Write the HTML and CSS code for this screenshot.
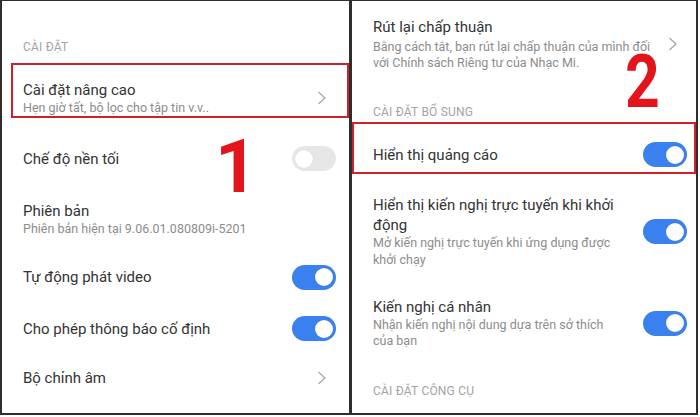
FILE: index.html
```html
<!DOCTYPE html>
<html lang="vi">
<head>
<meta charset="utf-8">
<title>Cài đặt</title>
<link rel="stylesheet" href="styles.css">
</head>
<body>
<div class="screen">
  <section class="panel panel-left">
    <div class="section-head head-top">CÀI ĐẶT</div>

    <div class="row row-box row-box-left">
      <div class="text">
        <div class="title">Cài đặt nâng cao</div>
        <div class="sub">Hẹn giờ tất, bộ lọc cho tập tin v.v..</div>
      </div>
      <span class="chev"><svg width="10" height="14" viewBox="0 0 10 14"><path d="M2 1.5 L8 7 L2 12.5" fill="none" stroke="#a8a8a8" stroke-width="1.4" stroke-linecap="round" stroke-linejoin="round"/></svg></span>
    </div>

    <div class="row row-dark">
      <div class="text"><div class="title">Chế độ nền tối</div></div>
      <span class="toggle"><span class="knob"></span></span>
    </div>

    <div class="row row-version">
      <div class="text">
        <div class="title">Phiên bản</div>
        <div class="sub">Phiên bản hiện tại 9.06.01.080809i-5201</div>
      </div>
    </div>

    <div class="row row-autoplay">
      <div class="text"><div class="title">Tự động phát video</div></div>
      <span class="toggle on"><span class="knob"></span></span>
    </div>

    <div class="row row-notify">
      <div class="text"><div class="title">Cho phép thông báo cố định</div></div>
      <span class="toggle on"><span class="knob"></span></span>
    </div>

    <div class="row row-eq">
      <div class="text"><div class="title">Bộ chỉnh âm</div></div>
      <span class="chev"><svg width="10" height="14" viewBox="0 0 10 14"><path d="M2 1.5 L8 7 L2 12.5" fill="none" stroke="#a8a8a8" stroke-width="1.4" stroke-linecap="round" stroke-linejoin="round"/></svg></span>
    </div>

    <span class="num num-1">1</span>
  </section>

  <div class="divider"></div>

  <section class="panel panel-right">
    <div class="row row-consent">
      <div class="text">
        <div class="title">Rút lại chấp thuận</div>
        <div class="sub">Bằng cách tắt, bạn rút lại chấp thuận của mình đối với Chính sách Riêng tư của Nhạc Mi.</div>
      </div>
      <span class="chev"><svg width="10" height="14" viewBox="0 0 10 14"><path d="M2 1.5 L8 7 L2 12.5" fill="none" stroke="#a8a8a8" stroke-width="1.4" stroke-linecap="round" stroke-linejoin="round"/></svg></span>
    </div>

    <div class="section-head head-extra">CÀI ĐẶT BỔ SUNG</div>

    <div class="row row-box row-box-right">
      <div class="text"><div class="title">Hiển thị quảng cáo</div></div>
      <span class="toggle on"><span class="knob"></span></span>
    </div>

    <div class="row row-recommend">
      <div class="text narrow">
        <div class="title">Hiển thị kiến nghị trực tuyến khi khởi động</div>
        <div class="sub">Mở kiến nghị trực tuyến khi ứng dụng được khởi chạy</div>
      </div>
      <span class="toggle on"><span class="knob"></span></span>
    </div>

    <div class="row row-personal">
      <div class="text narrow">
        <div class="title">Kiến nghị cá nhân</div>
        <div class="sub">Nhận kiến nghị nội dung dựa trên sở thích của bạn</div>
      </div>
      <span class="toggle on"><span class="knob"></span></span>
    </div>

    <div class="section-head head-tools">CÀI ĐẶT CÔNG CỤ</div>

    <span class="num num-2">2</span>
  </section>
</div>
</body>
</html>
```

FILE: styles.css
```css
* {
  box-sizing: border-box;
  margin: 0;
  padding: 0;
}

body {
  width: 700px;
  height: 417px;
  background: #ffffff;
  font-family: Roboto, "Noto Sans", sans-serif;
  overflow: hidden;
}

.screen {
  display: flex;
  width: 698px;
  height: 415px;
  border-top: 1px solid #2e2e2e;
  border-left: 2px solid #2e2e2e;
  border-right: 2px solid #2e2e2e;
  border-bottom: 2px solid #2e2e2e;
}

.panel {
  position: relative;
  overflow: hidden;
  background: #ffffff;
}

.panel-left {
  width: 347px;
  flex: none;
}

.divider {
  width: 3px;
  flex: none;
  background: #2e2e2e;
}

.panel-right {
  flex: 1;
}

.section-head {
  font-size: 12px;
  line-height: 14px;
  color: #a3a3a3;
  padding-left: 21px;
  letter-spacing: 0.2px;
}

.head-top {
  padding-top: 39px;
  margin-bottom: 9px;
}

.head-extra {
  margin-top: 33px;
  margin-bottom: 3.5px;
}

.head-tools {
  margin-top: 34px;
}

.row {
  display: flex;
  align-items: center;
}

.panel-left .row {
  padding: 0 13px 0 21px;
}

.panel-right .row {
  padding: 0 9px 0 21px;
}

.text {
  flex: 1;
  min-width: 0;
}

.text.narrow {
  max-width: 250px;
  margin-right: auto;
}

.title {
  font-size: 15px;
  line-height: 20px;
  color: #333333;
}

.sub {
  font-size: 12.5px;
  line-height: 16.5px;
  color: #8c8c8c;
}

.row-consent .sub {
  margin-top: 2px;
}

/* highlighted rows */
.row-box {
  border: 2px solid #cf1f28;
}

.panel-left .row-box-left {
  margin-left: 9px;
  height: 55px;
  padding: 15px 11px 0 10px;
}

.panel-right .row-box-right {
  height: 52px;
  padding: 13px 7px 0 19px;
}

/* left rows */
.row-dark { height: 81px; }
.row-version { height: 40px; }
.row-autoplay { height: 76px; }
.row-notify { height: 27px; }
.row-eq { height: 72px; }

/* right rows */
.panel-right .row-consent {
  padding-top: 15.5px;
}

.panel-right .row-recommend {
  padding-top: 21px;
}

.panel-right .row-personal {
  padding-top: 28.5px;
}

/* trailing widgets */
.chev {
  display: flex;
  flex: none;
  margin-left: 8px;
  margin-right: 9px;
}

.toggle {
  position: relative;
  flex: none;
  width: 44px;
  height: 25px;
  border-radius: 12.5px;
  background: #e6e6e6;
  margin-left: 16px;
}

.toggle.on {
  background: #3a80ee;
}

.knob {
  position: absolute;
  top: 3.5px;
  left: 3px;
  width: 18px;
  height: 18px;
  border-radius: 50%;
  background: #ffffff;
  box-shadow: 0 0 1px rgba(0, 0, 0, 0.15);
}

.toggle.on .knob {
  left: auto;
  right: 3px;
}

/* annotation numerals */
.num {
  position: absolute;
  font-family: Roboto, "Liberation Sans", sans-serif;
  font-weight: 700;
  font-size: 74px;
  line-height: 50px;
  color: #e3141c;
  transform-origin: left top;
}

.num-1 {
  left: 213px;
  top: 141px;
}

.num-2 {
  left: 273px;
  top: 56px;
  transform: scaleX(0.82);
}
```
